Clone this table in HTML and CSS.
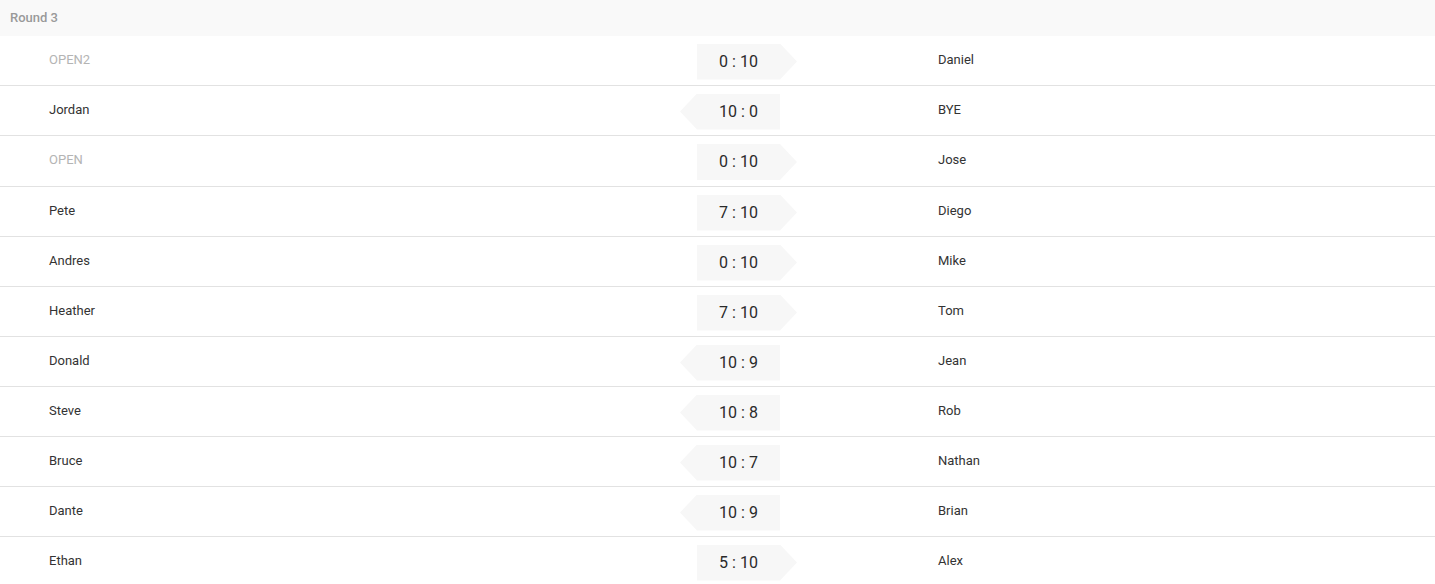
FILE: index.html
```html
<!DOCTYPE html>
<html>
<head>
<meta charset="utf-8">
<link rel="stylesheet" href="styles.css">
</head>
<body>
<div class="round">
  <div class="round-head">Round 3</div>
  <div class="match">
    <div class="player left muted">OPEN2</div>
    <div class="score-cell"><div class="score right-win">0 : 10</div></div>
    <div class="player right">Daniel</div>
  </div>
  <div class="match">
    <div class="player left">Jordan</div>
    <div class="score-cell"><div class="score left-win">10 : 0</div></div>
    <div class="player right">BYE</div>
  </div>
  <div class="match tall">
    <div class="player left muted">OPEN</div>
    <div class="score-cell"><div class="score right-win">0 : 10</div></div>
    <div class="player right">Jose</div>
  </div>
  <div class="match">
    <div class="player left">Pete</div>
    <div class="score-cell"><div class="score right-win">7 : 10</div></div>
    <div class="player right">Diego</div>
  </div>
  <div class="match">
    <div class="player left">Andres</div>
    <div class="score-cell"><div class="score right-win">0 : 10</div></div>
    <div class="player right">Mike</div>
  </div>
  <div class="match">
    <div class="player left">Heather</div>
    <div class="score-cell"><div class="score right-win">7 : 10</div></div>
    <div class="player right">Tom</div>
  </div>
  <div class="match">
    <div class="player left">Donald</div>
    <div class="score-cell"><div class="score left-win">10 : 9</div></div>
    <div class="player right">Jean</div>
  </div>
  <div class="match">
    <div class="player left">Steve</div>
    <div class="score-cell"><div class="score left-win">10 : 8</div></div>
    <div class="player right">Rob</div>
  </div>
  <div class="match">
    <div class="player left">Bruce</div>
    <div class="score-cell"><div class="score left-win">10 : 7</div></div>
    <div class="player right">Nathan</div>
  </div>
  <div class="match">
    <div class="player left">Dante</div>
    <div class="score-cell"><div class="score left-win">10 : 9</div></div>
    <div class="player right">Brian</div>
  </div>
  <div class="match">
    <div class="player left">Ethan</div>
    <div class="score-cell"><div class="score right-win">5 : 10</div></div>
    <div class="player right">Alex</div>
  </div>
</div>
</body>
</html>
```
FILE: styles.css
```css
html, body {
  margin: 0;
  padding: 0;
  background: #fff;
  font-family: Roboto, "Liberation Sans", sans-serif;
  overflow: hidden;
}

.round-head {
  height: 36px;
  background: #f9f9f9;
  color: #999;
  font-size: 13px;
  font-weight: 500;
  line-height: 36px;
  padding-left: 10px;
}

.match {
  display: flex;
  align-items: center;
  height: 49px;
  border-bottom: 1px solid #e2e2e2;
}

.match.tall {
  height: 50px;
}

.player {
  font-size: 13px;
  color: #333;
  line-height: 16px;
  margin-top: -2px;
}

.player.left {
  width: 648px;
  padding-left: 49px;
}

.player.right {
  padding-left: 158px;
}

.player.muted {
  color: #b4b4b4;
}

.score-cell {
  width: 83px;
  height: 36px;
  position: relative;
  margin-top: 2px;
}

.score {
  position: absolute;
  top: 0;
  height: 36px;
  width: 100px;
  background: #f7f7f7;
  color: #2a2a2a;
  font-size: 16px;
  font-weight: 400;
  line-height: 36px;
  box-sizing: border-box;
}

.score.right-win {
  left: 0;
  padding-right: 17px;
  text-align: center;
  clip-path: polygon(0 0, 83px 0, 100% 50%, 83px 100%, 0 100%);
}

.score.left-win {
  right: 0;
  padding-left: 17px;
  text-align: center;
  clip-path: polygon(17px 0, 100% 0, 100% 100%, 17px 100%, 0 50%);
}
```
